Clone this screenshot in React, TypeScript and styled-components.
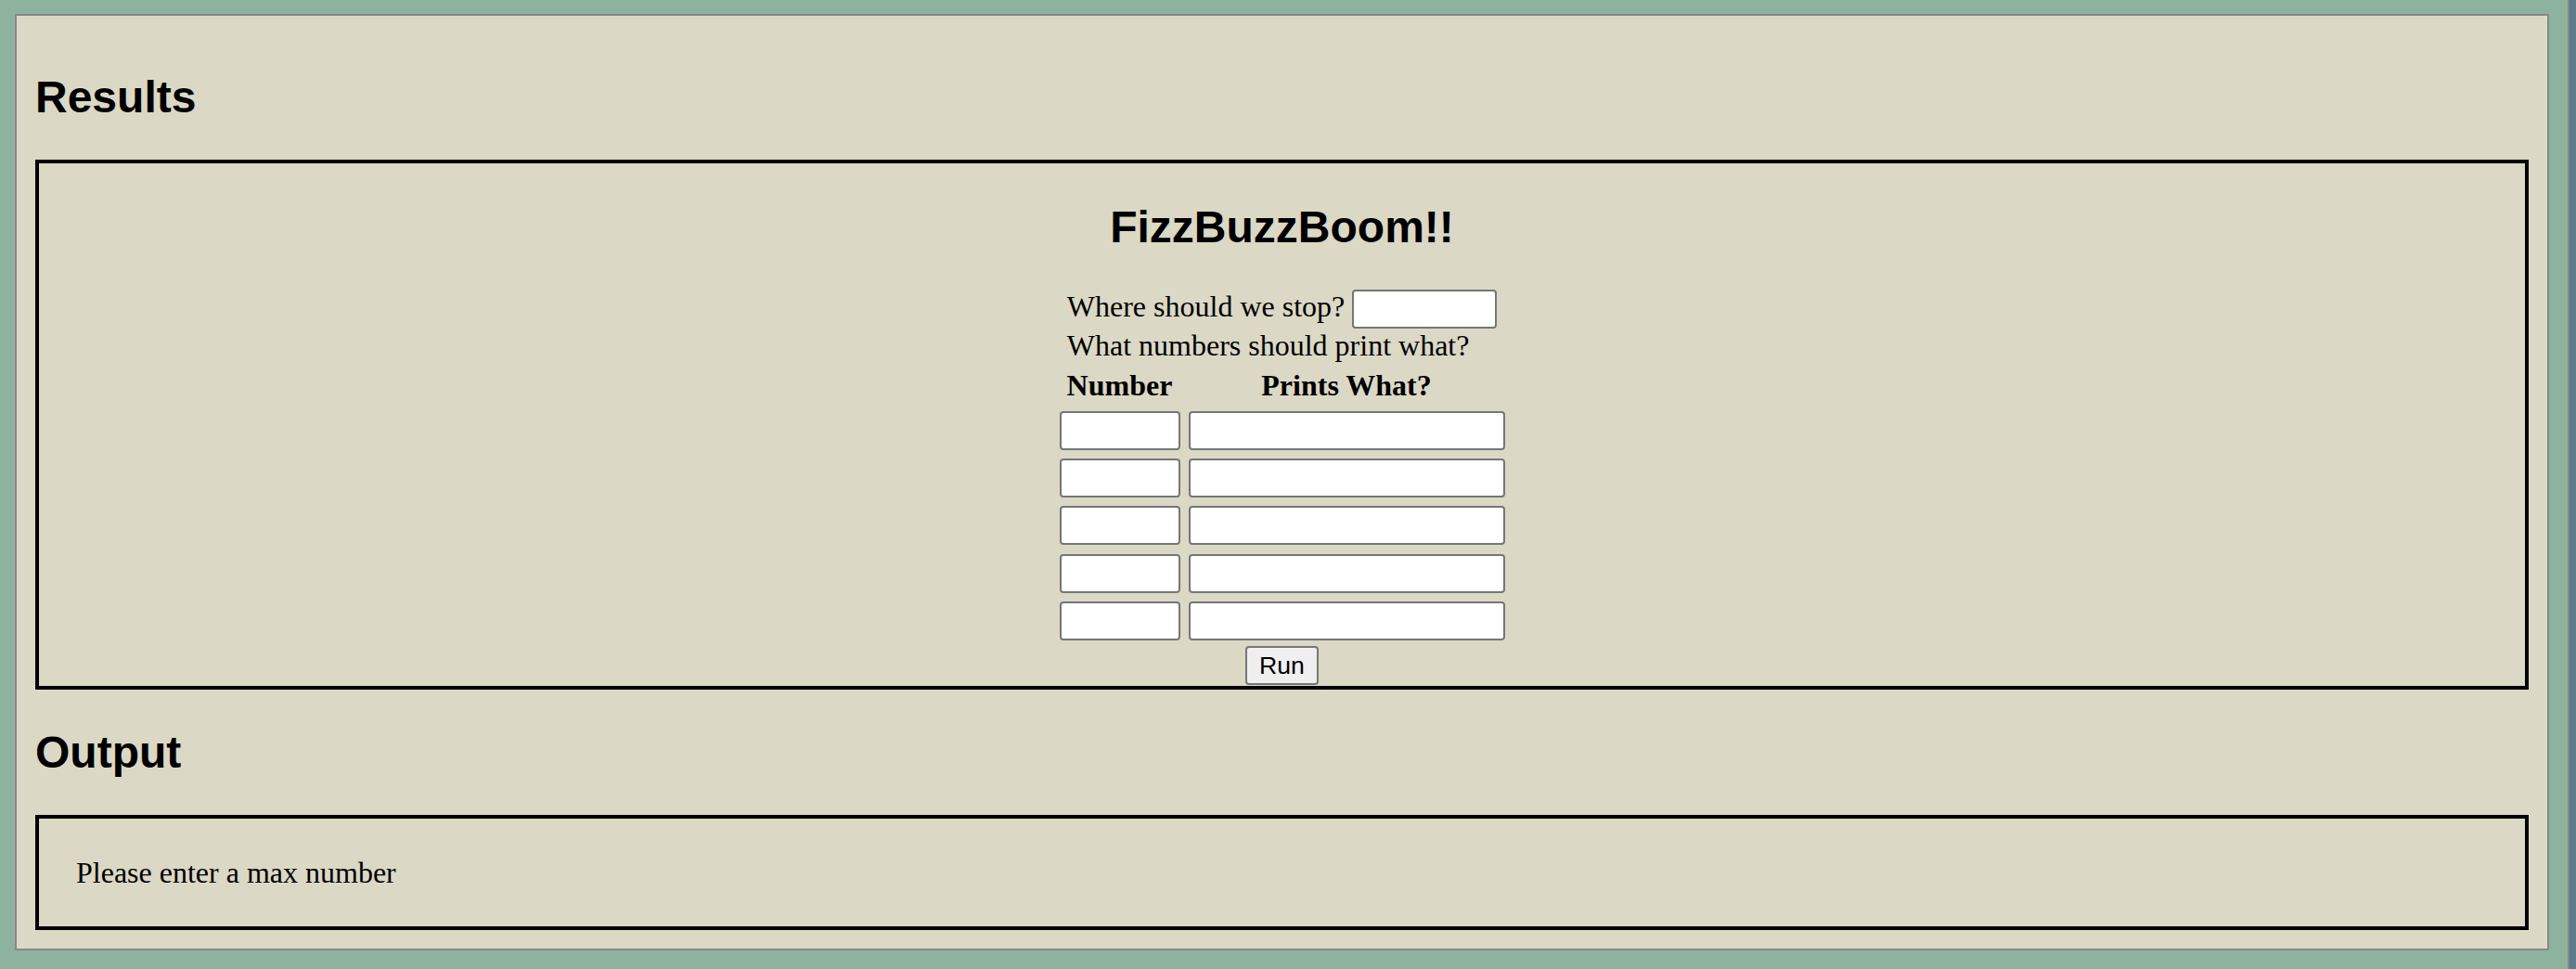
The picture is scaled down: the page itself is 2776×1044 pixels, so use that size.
import React from "react";
import styled, { createGlobalStyle } from "styled-components";

const GlobalStyle = createGlobalStyle`
  html, body {
    margin: 0;
    height: 100%;
    background: #8db39e;
    overflow: hidden;
  }
  #root {
    height: 100%;
  }
  * {
    box-sizing: border-box;
  }
`;

const Page = styled.div`
  display: flex;
  height: 100vh;
`;

const Main = styled.main`
  flex: 0 0 auto;
  padding: 15px 20px 20px 16px;
`;

const SideStrip = styled.aside`
  flex: 1;
  border-left: 2px solid #888888;
  background: #5b7c8c;
`;

const Panel = styled.section`
  width: 2731px;
  border: 2px solid #888888;
  background: #dbd8c5;
  padding: 20px;
`;

const SectionTitle = styled.h2`
  margin: 40px 0;
  font: 700 48px/55px "Liberation Sans", Arial, sans-serif;
  color: #000;
`;

const FramedBox = styled.div`
  border: 4px solid #000;
`;

const ResultsBody = styled(FramedBox)`
  display: flex;
  flex-direction: column;
  align-items: center;
`;

const AppTitle = styled.h2`
  margin: 41px 0 40px;
  font: 700 48px/55px "Liberation Sans", Arial, sans-serif;
  color: #000;
  text-align: center;
`;

const Prompt = styled.div`
  display: flex;
  flex-direction: column;
  align-items: flex-start;
`;

const TextLine = styled.span`
  font: 400 32px/37px "Liberation Serif", "Times New Roman", serif;
  color: #000;
`;

const StopRow = styled.label`
  display: flex;
  align-items: flex-start;
  gap: 8px;
  height: 42px;
`;

const Field = styled.input<{ $width?: number }>`
  width: ${(p) => (p.$width ? `${p.$width}px` : "100%")};
  height: 42px;
  border: 2px solid #767676;
  border-radius: 4px;
  background: #ffffff;
  padding: 2px 4px;
  font: 400 26.67px "Liberation Sans", Arial, sans-serif;
  outline: none;
`;

const RuleGrid = styled.div`
  display: grid;
  grid-template-columns: 130px 341px;
  column-gap: 9px;
  row-gap: 9.25px;
  padding-top: 5.5px;
`;

const HeaderCell = styled.div`
  font: 700 32px/37px "Liberation Serif", "Times New Roman", serif;
  color: #000;
  text-align: center;
`;

const RunButton = styled.button`
  margin: 6.25px 0 1px;
  width: 79px;
  height: 42px;
  padding: 0;
  border: 2px solid #767676;
  border-radius: 4px;
  background: #efefef;
  color: #000;
  font: 400 26.67px "Liberation Sans", Arial, sans-serif;
`;

const OutputBox = styled(FramedBox)`
  padding: 40px 40px 39px;
`;

const Message = styled.p`
  margin: 0;
  font: 400 32px/37px "Liberation Serif", "Times New Roman", serif;
  color: #000;
`;

const rules = [0, 1, 2, 3, 4];

export default function App() {
  return (
    <>
      <GlobalStyle />
      <Page>
        <Main>
          <Panel>
            <SectionTitle>Results</SectionTitle>
            <ResultsBody>
              <AppTitle>FizzBuzzBoom!!</AppTitle>
              <Prompt>
                <StopRow>
                  <TextLine>Where should we stop?</TextLine>
                  <Field type="text" $width={156} />
                </StopRow>
                <TextLine>What numbers should print what?</TextLine>
              </Prompt>
              <RuleGrid>
                <HeaderCell>Number</HeaderCell>
                <HeaderCell>Prints What?</HeaderCell>
                {rules.map((i) => (
                  <React.Fragment key={i}>
                    <Field type="text" />
                    <Field type="text" />
                  </React.Fragment>
                ))}
              </RuleGrid>
              <RunButton type="button">Run</RunButton>
            </ResultsBody>
            <SectionTitle>Output</SectionTitle>
            <OutputBox>
              <Message>Please enter a max number</Message>
            </OutputBox>
          </Panel>
        </Main>
        <SideStrip />
      </Page>
    </>
  );
}
